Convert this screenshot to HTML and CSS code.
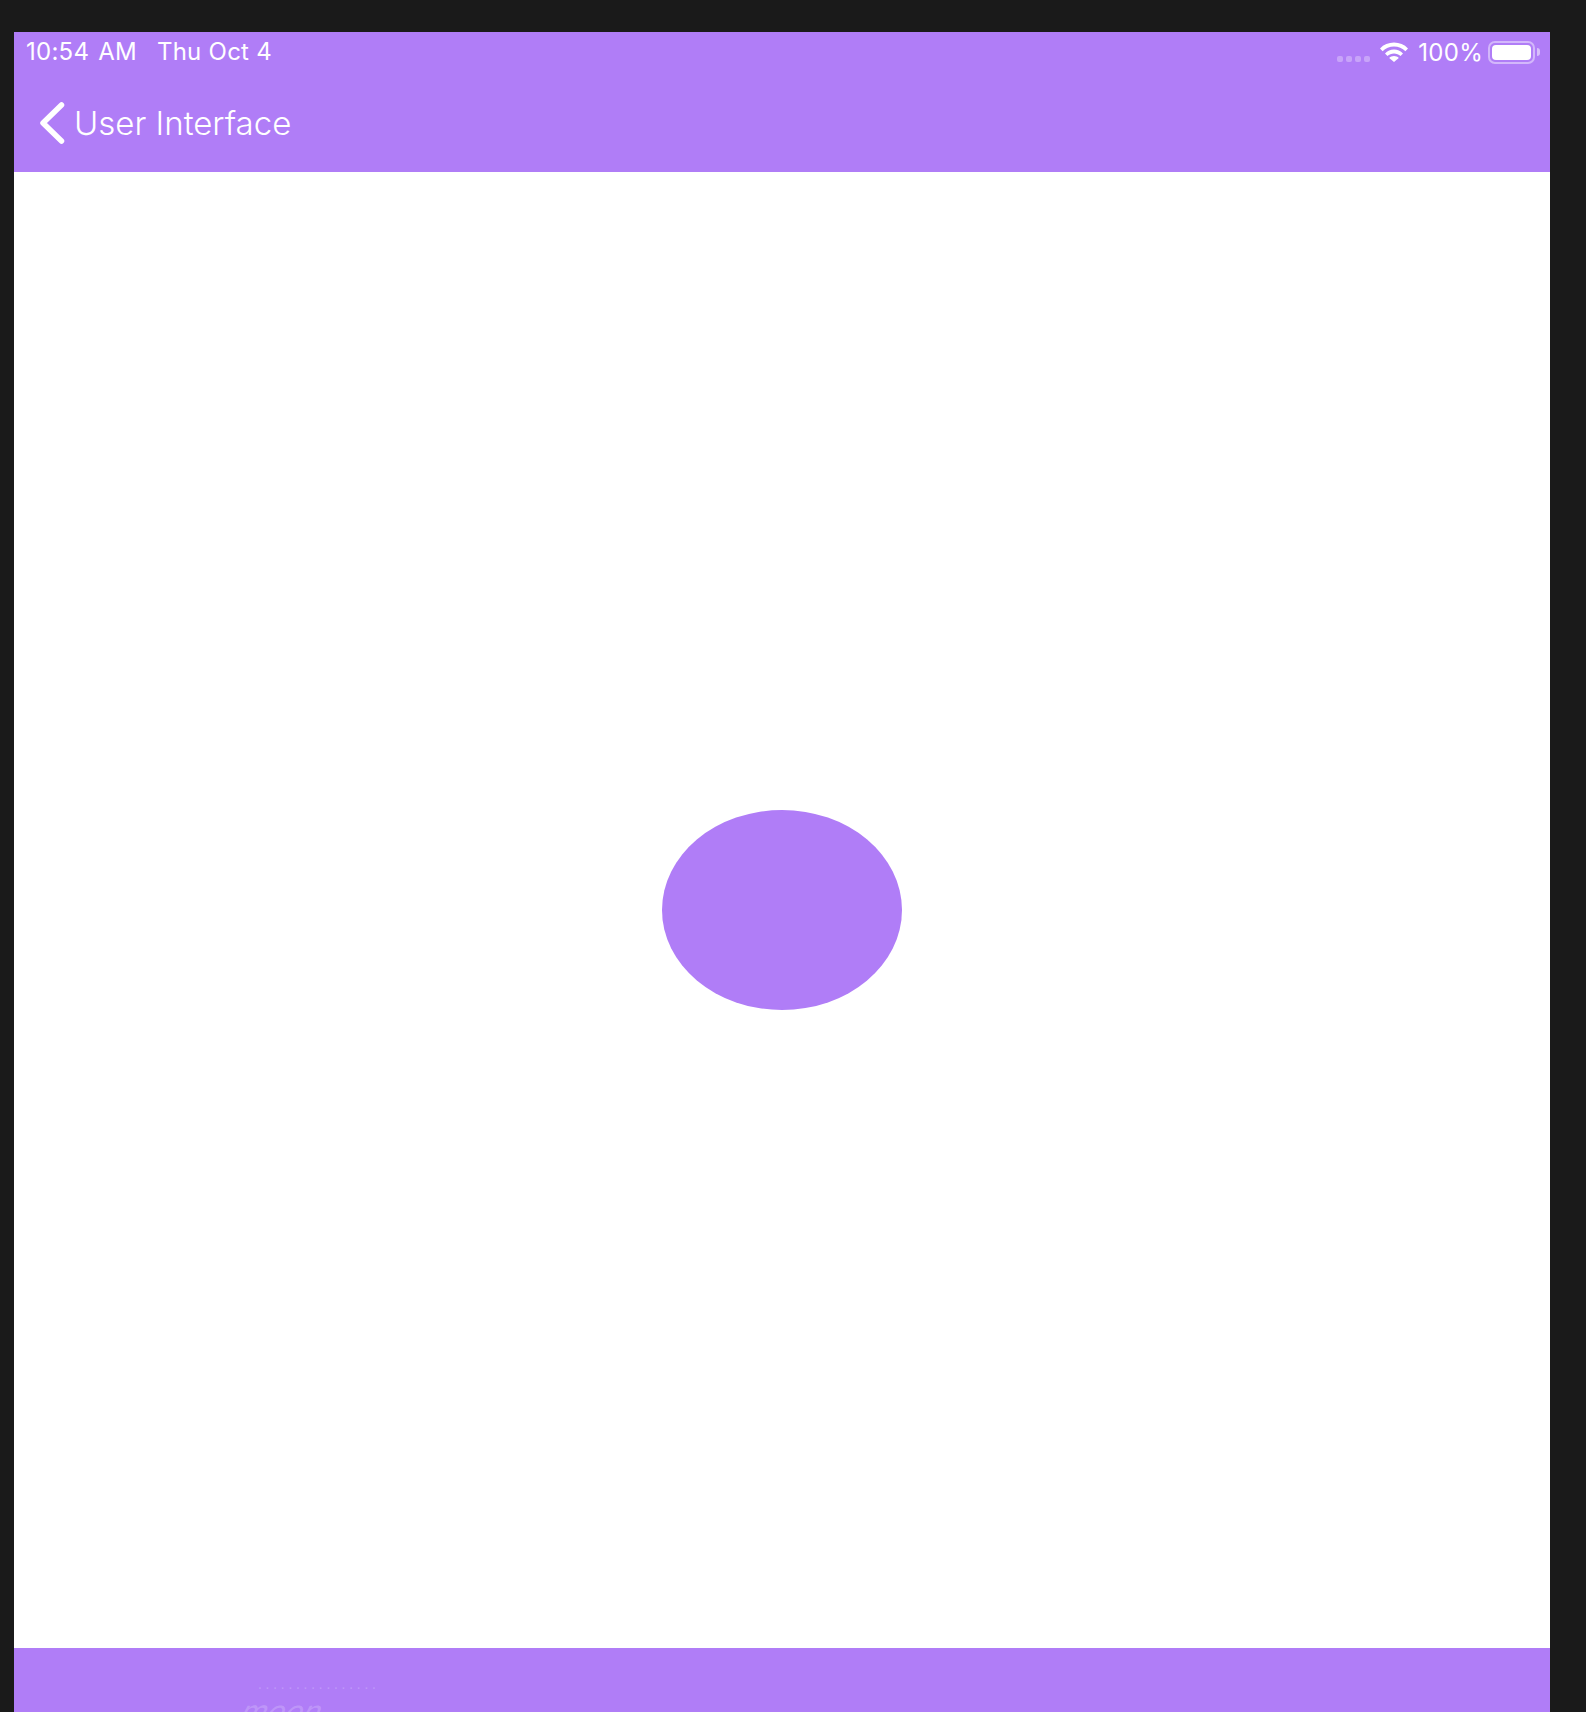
FILE: index.html
```html
<!DOCTYPE html>
<html lang="en">
<head>
<meta charset="utf-8">
<title>User Interface</title>
<link rel="stylesheet" href="styles.css">
</head>
<body>
<main class="device">
  <header class="header">
    <div class="status">
      <div class="status-left">
        <span class="clock">10:54 AM</span>
        <span>Thu Oct 4</span>
      </div>
      <div class="status-right">
        <span class="signal"><i></i><i></i><i></i><i></i></span>
        <svg class="wifi" viewBox="0 0 28 20" aria-hidden="true">
          <path d="M0 6.400C3.600 2.600 8.600 .5 14 .5s10.400 2.100 14 5.900l-2.600 2.800C22.500 6.200 18.400 4.400 14 4.400S5.500 6.200 2.600 9.200z"/>
          <path d="M5 11.400c2.400-2.400 5.600-3.800 9-3.800s6.600 1.400 9 3.800l-2.500 2.700c-1.700-1.700-4-2.700-6.500-2.700s-4.800 1-6.500 2.700z"/>
          <path d="M9.200 15.900c1.300-1.200 3-1.900 4.800-1.900s3.500 .7 4.800 1.900L14 20z"/>
        </svg>
        <span class="percent">100%</span>
        <span class="battery"><span class="battery-fill"></span></span>
        <span class="battery-tip"></span>
      </div>
    </div>
    <nav class="nav">
      <svg class="back" viewBox="0 0 26 42" aria-hidden="true">
        <path d="M22.500 3L4 21l18.500 18"/>
      </svg>
      <span class="nav-title">User Interface</span>
    </nav>
  </header>
  <section class="content">
    <div class="ball"></div>
  </section>
  <footer class="footer">
    <div class="ghost">
      <span class="ghost-line">. . . . . . . . . . . . . . . .</span>
      <span class="ghost-word">moon</span>
    </div>
  </footer>
</main>
</body>
</html>
```

FILE: styles.css
```css
* {
  box-sizing: border-box;
}

html,
body {
  margin: 0;
  height: 1712px;
  overflow: hidden;
  background: #1a1a1a;
}

body {
  font-family: Inter, "Liberation Sans", sans-serif;
  color: #fff;
}

.device {
  display: flex;
  flex-direction: column;
  width: 1536px;
  height: 1680px;
  margin: 32px 0 0 14px;
  background: #fff;
}

.header {
  flex: 0 0 140px;
  background: #b07df7;
}

.status {
  display: flex;
  justify-content: space-between;
  align-items: center;
  height: 40px;
  padding: 0 10px 0 12px;
}

.status-left {
  display: flex;
  gap: 20px;
  font-size: 24px;
  line-height: 40px;
  letter-spacing: 0.25px;
}

.clock {
  word-spacing: 2px;
}

.status-right {
  display: flex;
  align-items: center;
  font-size: 24px;
}

.signal {
  display: flex;
  gap: 3px;
  margin: 14px 10px 0 0;
}

.signal i {
  width: 6px;
  height: 6px;
  border-radius: 2px;
  background: rgba(255, 255, 255, 0.3);
}

.wifi {
  width: 28px;
  height: 20px;
  margin-right: 10px;
  fill: #fff;
}

.percent {
  margin-right: 5px;
  letter-spacing: 0.3px;
}

.battery {
  display: flex;
  width: 47px;
  height: 23px;
  padding: 2px;
  border: 2px solid rgba(255, 255, 255, 0.45);
  border-radius: 7px;
}

.battery-fill {
  flex: 1;
  border-radius: 4px;
  background: #fff;
}

.battery-tip {
  width: 3px;
  height: 8px;
  margin-left: 2px;
  border-radius: 0 3px 3px 0;
  background: rgba(255, 255, 255, 0.5);
}

.nav {
  display: flex;
  align-items: center;
  height: 100px;
  padding: 1px 0 0 25px;
}

.back {
  width: 26px;
  height: 42px;
  margin-right: 9px;
  fill: none;
  stroke: #fff;
  stroke-width: 5.500px;
  stroke-linecap: round;
  stroke-linejoin: round;
}

.nav-title {
  font-size: 33px;
  line-height: 42px;
  font-weight: 350;
}

.content {
  flex: 1;
  display: flex;
  align-items: center;
  justify-content: center;
}

.ball {
  width: 240px;
  height: 200px;
  border-radius: 50%;
  background: #b07df7;
}

.footer {
  position: relative;
  flex: 0 0 64px;
  overflow: hidden;
  background: #b07df7;
}

.ghost {
  position: absolute;
  left: 228px;
  top: 30px;
  color: rgba(255, 255, 255, 0.2);
}

.ghost-line {
  display: block;
  margin-left: 16px;
  font-size: 13px;
  line-height: 12px;
  letter-spacing: 0.1px;
}

.ghost-word {
  display: block;
  margin-top: 6px;
  font-size: 30px;
  line-height: 30px;
  font-style: italic;
  font-weight: 400;
  transform: skewX(-20deg);
}
```
